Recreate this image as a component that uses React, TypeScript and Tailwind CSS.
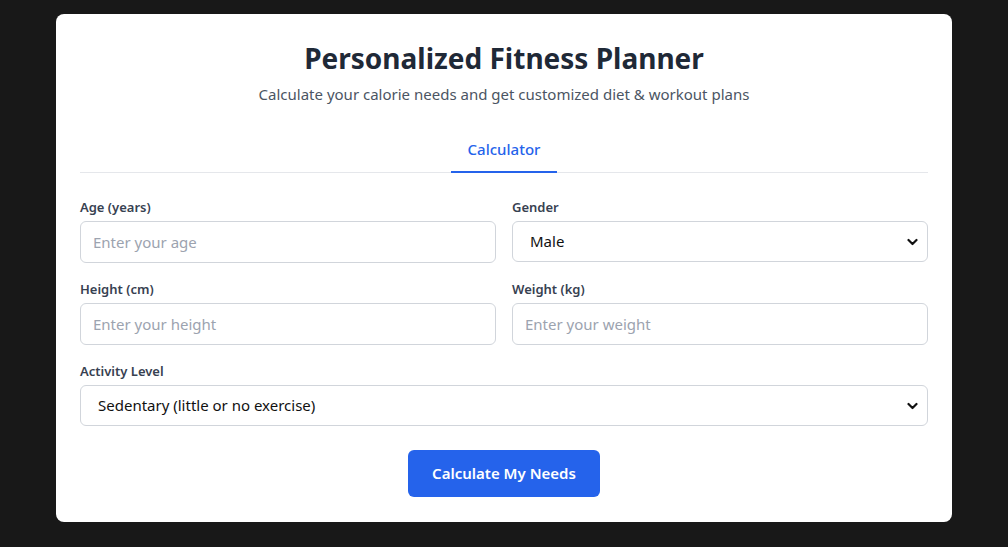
import React, { useState } from "react";

const Chevron = () => (
  <svg
    className="pointer-events-none absolute right-[10px] top-1/2 -translate-y-1/2"
    width="11"
    height="8"
    viewBox="0 0 11 8"
    fill="none"
  >
    <path d="M1.5 2 L5.5 6 L9.5 2" stroke="#111" strokeWidth="2.2" strokeLinecap="round" strokeLinejoin="round" />
  </svg>
);

const Field = ({ label, children }: { label: string; children: React.ReactNode }) => (
  <div className="flex flex-col">
    <label className="mb-1 text-[13px] font-semibold leading-[20px] text-[#374151]">{label}</label>
    {children}
  </div>
);

const inputCls =
  "h-[42px] w-full rounded-md border border-[#d1d5db] bg-white px-3 text-[15px] text-[#111827] placeholder:text-[#9ca3af] outline-none";

const selectCls =
  "h-[41px] w-full appearance-none rounded-md border border-[#d1d5db] bg-white pl-[17px] pr-8 text-[15px] text-[#111] outline-none";

export default function App() {
  const [gender, setGender] = useState("male");
  const [activity, setActivity] = useState("sedentary");

  return (
    <div className="min-h-[547px] bg-[#181818] pt-[14px] font-['Noto_Sans',sans-serif]">
      <div className="mx-auto w-[896px] rounded-lg bg-white px-6 pb-[25px] pt-[26px]">
        <div className="mb-[21px] text-center">
          <h1 className="mb-[6px] text-[28px] font-bold leading-[36px] text-[#1f2937]">
            Personalized Fitness Planner
          </h1>
          <p className="text-[15px] leading-6 text-[#4b5563]">
            Calculate your calorie needs and get customized diet &amp; workout plans
          </p>
        </div>

        <div className="mb-6 flex justify-center border-b border-[#e5e7eb]">
          <button
            type="button"
            className="-mb-px border-b-2 border-[#2563eb] px-[17px] py-[10px] text-[15px] font-medium leading-6 text-[#2563eb]"
          >
            Calculator
          </button>
        </div>

        <div className="grid grid-cols-2 gap-x-4 gap-y-4">
          <Field label="Age (years)">
            <input type="number" placeholder="Enter your age" className={inputCls} />
          </Field>
          <Field label="Gender">
            <div className="relative">
              <select value={gender} onChange={(e) => setGender(e.target.value)} className={selectCls}>
                <option value="male">Male</option>
                <option value="female">Female</option>
              </select>
              <Chevron />
            </div>
          </Field>
          <Field label="Height (cm)">
            <input type="number" placeholder="Enter your height" className={inputCls} />
          </Field>
          <Field label="Weight (kg)">
            <input type="number" placeholder="Enter your weight" className={inputCls} />
          </Field>
          <div className="col-span-2">
            <Field label="Activity Level">
              <div className="relative">
                <select value={activity} onChange={(e) => setActivity(e.target.value)} className={selectCls}>
                  <option value="sedentary">Sedentary (little or no exercise)</option>
                  <option value="light">Lightly active (1-3 days/week)</option>
                  <option value="moderate">Moderately active (3-5 days/week)</option>
                  <option value="very">Very active (6-7 days/week)</option>
                </select>
                <Chevron />
              </div>
            </Field>
          </div>
        </div>

        <div className="mt-6 flex justify-center">
          <button
            type="button"
            className="h-[47px] w-[192px] rounded-md bg-[#2563eb] text-[15px] font-semibold text-white"
          >
            Calculate My Needs
          </button>
        </div>
      </div>
    </div>
  );
}
